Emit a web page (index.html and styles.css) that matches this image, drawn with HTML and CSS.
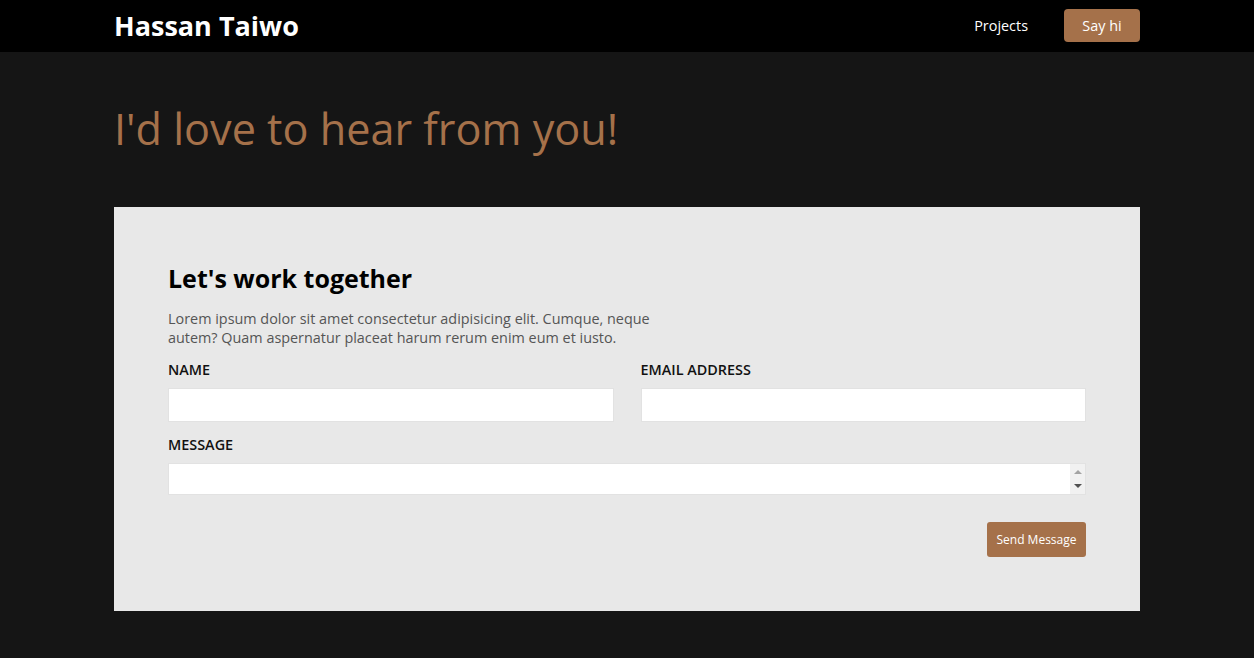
FILE: index.html
```html
<!DOCTYPE html>
<html lang="en">
<head>
<meta charset="utf-8">
<title>Hassan Taiwo</title>
<link rel="stylesheet" href="styles.css">
</head>
<body>
<header class="navbar">
  <div class="container nav-inner">
    <a class="brand" href="#">Hassan Taiwo</a>
    <nav class="nav-links">
      <a class="nav-link" href="#">Projects</a>
      <a class="nav-btn" href="#">Say hi</a>
    </nav>
  </div>
</header>
<main class="container">
  <h1 class="page-title">I'd love to hear from you!</h1>
  <section class="card">
    <h2 class="card-title">Let's work together</h2>
    <p class="card-text">Lorem ipsum dolor sit amet consectetur adipisicing elit. Cumque, neque autem? Quam aspernatur placeat harum rerum enim eum et iusto.</p>
    <form class="form">
      <div class="row">
        <div class="field">
          <label class="label" for="name">Name</label>
          <input class="input" id="name" type="text">
        </div>
        <div class="field">
          <label class="label" for="email">Email address</label>
          <input class="input" id="email" type="email">
        </div>
      </div>
      <div class="field">
        <label class="label" for="message">Message</label>
        <div class="textarea-wrap">
          <textarea class="textarea" id="message" rows="1"></textarea>
          <div class="scrollbar" aria-hidden="true">
            <span class="arrow-up"></span>
            <span class="arrow-down"></span>
          </div>
        </div>
      </div>
      <div class="actions">
        <button class="send-btn" type="button">Send Message</button>
      </div>
    </form>
  </section>
</main>
</body>
</html>
```

FILE: styles.css
```css
* { box-sizing: border-box; }
html, body { margin: 0; padding: 0; }
body {
  background: #151515;
  font-family: "Open Sans", "Noto Sans", sans-serif;
  color: #111;
}
.container {
  width: 1026px;
  margin: 0 auto;
}
.navbar {
  background: #000;
  height: 52px;
}
.nav-inner {
  display: flex;
  align-items: center;
  justify-content: space-between;
  height: 52px;
}
.brand {
  color: #fff;
  font-weight: 700;
  font-size: 27px;
  text-decoration: none;
  line-height: 1;
  margin-top: -1px;
}
.nav-links {
  display: flex;
  align-items: center;
  gap: 36px;
  margin-top: -1px;
}
.nav-link {
  color: #fff;
  text-decoration: none;
  font-size: 14.4px;
}
.nav-btn {
  background: #a5714a;
  color: #fff;
  text-decoration: none;
  font-size: 14.4px;
  width: 76px;
  height: 33px;
  border-radius: 4px;
  display: flex;
  align-items: center;
  justify-content: center;
}
.page-title {
  margin: 0;
  padding: 49px 0 0;
  height: 155px;
  color: #a5714a;
  font-weight: 400;
  font-size: 43.2px;
  line-height: 56px;
}
.card {
  background: #e8e8e8;
  padding: 53px 54px 54px;
  height: 404px;
}
.card-title {
  margin: 0;
  font-size: 25px;
  font-weight: 700;
  line-height: 36px;
  color: #000;
}
.card-text {
  margin: 13px 0 0;
  width: 500px;
  font-size: 14.4px;
  line-height: 19px;
  color: #555;
}
.form {
  display: flex;
  flex-direction: column;
  margin-top: 14px;
}
.row {
  display: flex;
  gap: 27px;
}
.field {
  flex: 1;
  display: flex;
  flex-direction: column;
  margin-bottom: 14px;
}
.label {
  font-size: 14.4px;
  font-weight: 600;
  text-transform: uppercase;
  line-height: 18px;
  margin-bottom: 9px;
  color: #111;
}
.input {
  height: 34px;
  background: #fff;
  border: 1px solid #e2e2e2;
  font: inherit;
  font-size: 14px;
  padding: 4px 8px;
  outline: none;
}
.textarea-wrap {
  position: relative;
  margin-bottom: 13px;
}
.textarea {
  display: block;
  width: 100%;
  height: 32px;
  background: #fff;
  border: 1px solid #e2e2e2;
  font: inherit;
  font-size: 14px;
  padding: 4px 8px;
  resize: none;
  overflow: hidden;
  outline: none;
}
.scrollbar {
  position: absolute;
  top: 1px;
  right: 1px;
  bottom: 1px;
  width: 15px;
  background: #f1f1f1;
  display: flex;
  flex-direction: column;
  align-items: center;
  justify-content: space-between;
  padding: 6px 0 6px;
}
.arrow-up {
  width: 0;
  height: 0;
  border-left: 4px solid transparent;
  border-right: 4px solid transparent;
  border-bottom: 4px solid #a3a3a3;
}
.arrow-down {
  width: 0;
  height: 0;
  border-left: 4px solid transparent;
  border-right: 4px solid transparent;
  border-top: 4px solid #505050;
}
.actions {
  display: flex;
  justify-content: flex-end;
}
.send-btn {
  background: #a5714a;
  color: #fff;
  border: none;
  border-radius: 3px;
  font-family: "Open Sans", "Noto Sans", sans-serif;
  font-size: 12px;
  width: 99px;
  height: 35px;
  padding: 0;
}
```
